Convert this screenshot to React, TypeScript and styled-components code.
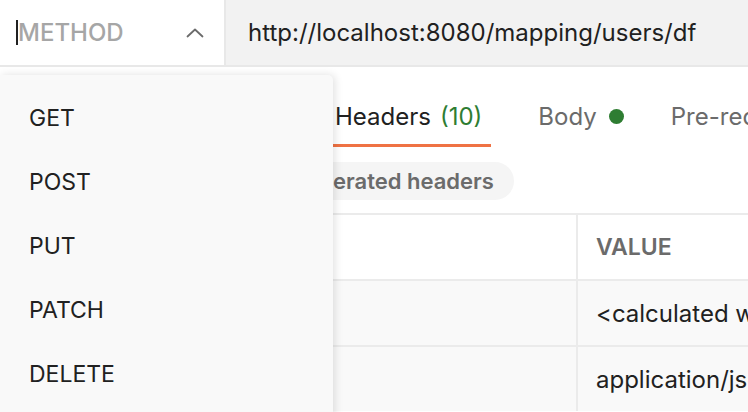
import React from "react";
import styled, { createGlobalStyle } from "styled-components";

const Global = createGlobalStyle`
  html, body { margin: 0; padding: 0; background: #ffffff; }
  body { font-family: Inter, "Open Sans", sans-serif; color: #212121; overflow: hidden; }
  * { box-sizing: border-box; }
`;

const Page = styled.div`
  position: relative;
  width: 748px;
  height: 412px;
  overflow: hidden;
  background: #ffffff;
`;

const TopBar = styled.div`
  display: flex;
  height: 67px;
  border-bottom: 2px solid #e8e8e8;
`;

const MethodBox = styled.div`
  width: 226px;
  display: flex;
  align-items: center;
  padding: 0 20px 0 16px;
  border-right: 2px solid #e8e8e8;
  background: #ffffff;
`;

const Caret = styled.span`
  width: 2px;
  height: 25px;
  background: #212121;
`;

const Placeholder = styled.span`
  flex: 1;
  font-size: 24px;
  font-weight: 500;
  color: #a6a6a6;
`;

const UrlBox = styled.div`
  flex: 1;
  display: flex;
  align-items: center;
  padding-left: 22px;
  background: #f2f2f2;
  font-size: 24px;
  color: #212121;
  white-space: nowrap;
  overflow: hidden;
`;

const Content = styled.div`
  display: flex;
  flex-direction: column;
  padding-left: 333px;
`;

const Tabs = styled.div`
  display: flex;
  align-items: stretch;
  gap: 45px;
  height: 80px;
  white-space: nowrap;
`;

const Tab = styled.div<{ $active?: boolean }>`
  display: flex;
  align-items: center;
  padding: 22px ${(p) => (p.$active ? "9px" : "0")} 0 2px;
  font-size: 24px;
  color: ${(p) => (p.$active ? "#212121" : "#6b6b6b")};
  border-bottom: 3px solid ${(p) => (p.$active ? "#ef7244" : "transparent")};
`;

const Count = styled.span`
  margin-left: 9px;
  color: #2e7d32;
`;

const Dot = styled.span`
  margin-left: 12px;
  width: 15px;
  height: 15px;
  border-radius: 50%;
  background: #2e7d32;
`;

const ChipRow = styled.div`
  display: flex;
  padding: 15px 0 13px 161px;
  margin-left: -333px;
`;

const Chip = styled.div`
  height: 38px;
  display: flex;
  align-items: center;
  padding: 0 20px;
  border-radius: 19px;
  background: #f5f5f5;
  font-size: 22px;
  font-weight: 600;
  color: #6b6b6b;
  white-space: nowrap;
`;

const Table = styled.div`
  margin-left: -333px;
  padding-left: 20px;
  display: flex;
  flex-direction: column;
`;

const Row = styled.div<{ $shade?: boolean }>`
  display: grid;
  grid-template-columns: 556px 1fr;
  height: 66px;
  border-top: 2px solid #ebebeb;
  background: ${(p) => (p.$shade ? "#f9f9f9" : "#ffffff")};
`;

const Cell = styled.div<{ $head?: boolean }>`
  display: flex;
  align-items: center;
  padding-left: 18px;
  border-left: 2px solid #ebebeb;
  font-size: ${(p) => (p.$head ? "23px" : "24px")};
  font-weight: ${(p) => (p.$head ? 600 : 400)};
  color: ${(p) => (p.$head ? "#6b6b6b" : "#212121")};
  white-space: nowrap;
  overflow: hidden;
  &:first-child { border-left: none; }
`;

const Menu = styled.div`
  position: absolute;
  left: 0;
  top: 75px;
  width: 333px;
  height: 360px;
  padding-top: 11px;
  background: #f9f9f9;
  border-radius: 0 5px 0 0;
  box-shadow: 2px 0 8px rgba(0, 0, 0, 0.12);
  display: flex;
  flex-direction: column;
`;

const MenuItem = styled.div`
  height: 64px;
  display: flex;
  align-items: center;
  padding-left: 29px;
  font-size: 23px;
  color: #212121;
`;

const Chevron = () => (
  <svg width="18" height="10" viewBox="0 0 18 10" fill="none">
    <path d="M1.5 8.5 L9 1.5 L16.5 8.5" stroke="#6b6b6b" strokeWidth="1.8" strokeLinecap="round" strokeLinejoin="round" />
  </svg>
);

export default function App() {
  const methods = ["GET", "POST", "PUT", "PATCH", "DELETE"];
  return (
    <Page>
      <Global />
      <TopBar>
        <MethodBox>
          <Caret />
          <Placeholder>METHOD</Placeholder>
          <Chevron />
        </MethodBox>
        <UrlBox>http://localhost:8080/mapping/users/df</UrlBox>
      </TopBar>
      <Content>
        <Tabs>
          <Tab $active>
            Headers<Count>(10)</Count>
          </Tab>
          <Tab>
            Body<Dot />
          </Tab>
          <Tab>Pre-request Script</Tab>
        </Tabs>
        <ChipRow>
          <Chip>Hide auto-generated headers</Chip>
        </ChipRow>
        <Table>
          <Row>
            <Cell $head />
            <Cell $head>VALUE</Cell>
          </Row>
          <Row $shade>
            <Cell />
            <Cell>&lt;calculated when request is sent&gt;</Cell>
          </Row>
          <Row $shade>
            <Cell />
            <Cell>application/json</Cell>
          </Row>
        </Table>
      </Content>
      <Menu>
        {methods.map((m) => (
          <MenuItem key={m}>{m}</MenuItem>
        ))}
      </Menu>
    </Page>
  );
}
